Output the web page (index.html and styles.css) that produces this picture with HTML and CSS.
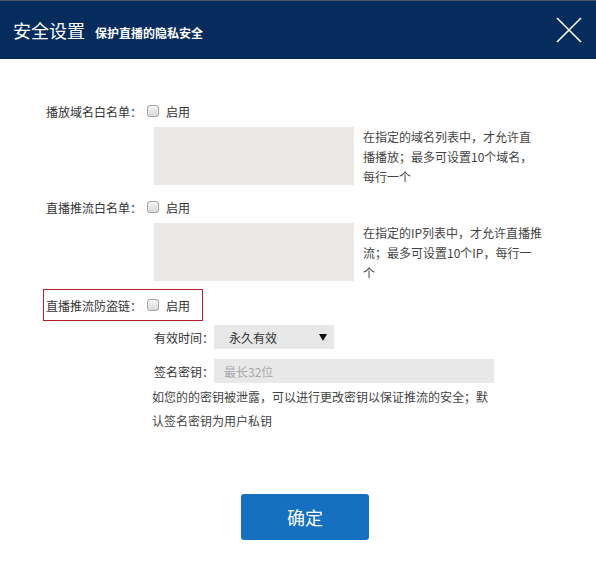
FILE: index.html
```html
<!DOCTYPE html>
<html lang="zh-CN">
<head>
  <meta charset="UTF-8">
  <meta name="viewport" content="width=device-width, initial-scale=1">
  <title>安全设置</title>
  <link rel="stylesheet" href="styles.css">
</head>
<body>
  <div class="dialog">
    <div class="dialog-header">
      <h1>安全设置</h1>
      <span class="subtitle">保护直播的隐私安全</span>
      <button class="close" aria-label="关闭">
        <svg width="26" height="26" viewBox="0 0 26 26">
          <path d="M1 1 L25 25 M25 1 L1 25" stroke="#fff" stroke-width="1.6" fill="none"/>
        </svg>
      </button>
    </div>

    <div class="dialog-body">
      <!-- 播放域名白名单 -->
      <div class="section">
        <label class="row">
          <span class="row-label">播放域名白名单：</span>
          <input type="checkbox" class="check">
          <span>启用</span>
        </label>
        <div class="field">
          <textarea class="list-input"></textarea>
          <p class="help">在指定的域名列表中，才允许直<br>播播放；最多可设置10个域名，<br>每行一个</p>
        </div>
      </div>

      <!-- 直播推流白名单 -->
      <div class="section section-2">
        <label class="row">
          <span class="row-label">直播推流白名单：</span>
          <input type="checkbox" class="check">
          <span>启用</span>
        </label>
        <div class="field">
          <textarea class="list-input"></textarea>
          <p class="help">在指定的IP列表中，才允许直播推<br>流；最多可设置10个IP，每行一<br>个</p>
        </div>
      </div>

      <!-- 直播推流防盗链 -->
      <div class="section section-3">
        <label class="row row-error">
          <span class="row-label">直播推流防盗链：</span>
          <input type="checkbox" class="check">
          <span>启用</span>
        </label>
        <div class="sub">
          <div class="sub-row">
            <span class="sub-label">有效时间：</span>
            <span class="select-wrap">
              <select class="select">
                <option>永久有效</option>
              </select>
            </span>
          </div>
          <div class="sub-row">
            <span class="sub-label">签名密钥：</span>
            <input type="text" class="key-input" placeholder="最长32位">
          </div>
          <p class="sub-help">如您的的密钥被泄露，可以进行更改密钥以保证推流的安全；默认签名密钥为用户私钥</p>
        </div>
      </div>

      <button class="submit">确定</button>
    </div>
  </div>
</body>
</html>
```

FILE: styles.css
```css
body {
  margin: 0;
  font-family: "Noto Sans CJK SC", "Liberation Sans", sans-serif;
  font-size: 12px;
  color: #333;
  background: #fff;
  text-spacing-trim: space-all;
}
.dialog {
  width: 596px;
  height: 573px;
  background: #fff;
}
.dialog-header {
  display: flex;
  align-items: baseline;
  height: 58px;
  padding-left: 13px;
  background: #062c5d;
  border-top: 1px solid #4a5666;
  color: #fff;
  position: relative;
}
.dialog-header h1 {
  margin: 0;
  font-size: 18px;
  font-weight: normal;
  line-height: 58px;
}
.subtitle {
  margin-left: 10px;
  font-size: 12px;
  font-weight: bold;
}
.close {
  position: absolute;
  right: 14px;
  top: 16px;
  width: 26px;
  height: 26px;
  padding: 0;
  border: none;
  background: none;
  cursor: pointer;
}
.close svg {
  display: block;
}
.dialog-body {
  padding: 36px 0 0 43px;
}
.section-2 {
  margin-top: 6px;
}
.section-3 {
  margin-top: 8px;
}
.row {
  display: inline-flex;
  align-items: center;
  height: 30px;
  padding: 0 12px 0 2px;
  border: 1px solid transparent;
  cursor: pointer;
}
.row-error {
  border-color: #b8202a;
}
.row-label {
  width: 101px;
}
.check {
  appearance: none;
  -webkit-appearance: none;
  width: 12px;
  height: 12px;
  margin: 0 7px 0 0;
  border: 1px solid #a3a3a3;
  border-radius: 3px;
  background: linear-gradient(#f6f6f6, #dadada);
}
.check:checked {
  background: #1570c0;
  border-color: #1570c0;
}
.field {
  display: flex;
  align-items: flex-start;
  height: 58px;
  margin-left: 111px;
}
.list-input {
  width: 200px;
  height: 58px;
  padding: 0;
  border: none;
  background: #ebe9e6;
  resize: none;
}
.help {
  margin: 0 0 0 9px;
  line-height: 20px;
  white-space: nowrap;
  color: #444;
}
.sub {
  margin: 4px 0 0 109px;
  width: 342px;
}
.sub-row {
  display: flex;
  align-items: center;
  margin-bottom: 10px;
}
.sub-label {
  width: 60px;
  padding-left: 2px;
}
.select-wrap {
  position: relative;
  display: block;
}
.select-wrap::after {
  content: "";
  position: absolute;
  right: 7px;
  top: 9px;
  border-left: 4px solid transparent;
  border-right: 4px solid transparent;
  border-top: 7px solid #111;
  pointer-events: none;
}
.select {
  appearance: none;
  -webkit-appearance: none;
  width: 120px;
  height: 24px;
  padding: 0 0 0 15px;
  border: none;
  border-radius: 0;
  background: #e8e8e8;
  font-family: inherit;
  font-size: 12px;
  color: #333;
}
.key-input {
  width: 270px;
  height: 24px;
  padding: 0 0 0 10px;
  border: none;
  background: #e8e8e8;
  font-family: inherit;
  font-size: 12px;
}
.key-input::placeholder {
  color: #a8a8a8;
}
.sub-help {
  margin: -8px 0 0;
  line-height: 24px;
  color: #444;
}
.submit {
  display: block;
  width: 128px;
  height: 46px;
  margin: 61px 0 0 198px;
  border: none;
  border-radius: 3px;
  background: #1570c0;
  color: #fff;
  font-family: inherit;
  font-size: 18px;
  cursor: pointer;
}
.submit:hover {
  background: #0f5fa6;
}
```
